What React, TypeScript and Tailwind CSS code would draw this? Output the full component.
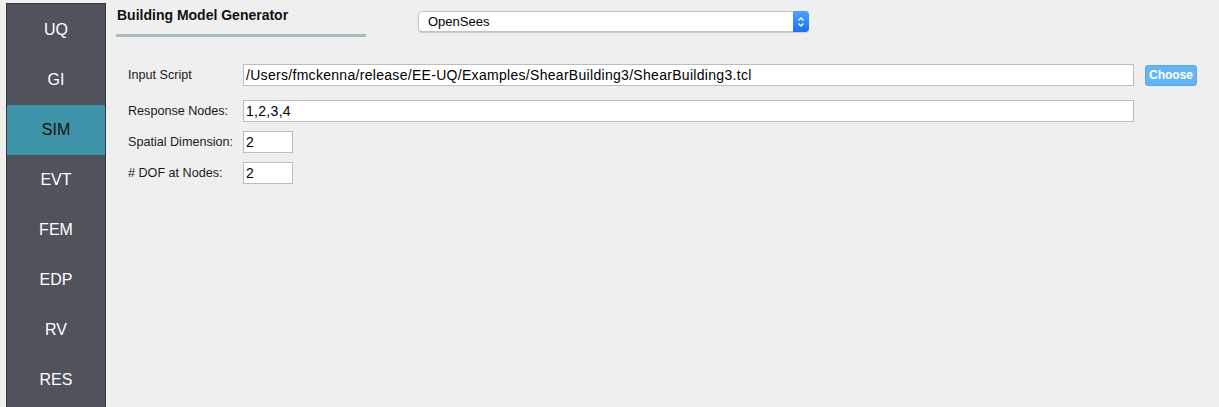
import React from "react";

const tabs = ["UQ", "GI", "SIM", "EVT", "FEM", "EDP", "RV", "RES"];

function Sidebar() {
  return (
    <div className="ml-[6px] mt-[3px] w-[100px] shrink-0 bg-[#50535b] border border-[#34373c] border-b-0 pt-[1px]">
      {tabs.map((t) => (
        <div
          key={t}
          className={
            t === "SIM"
              ? "h-[50px] flex items-center justify-center bg-[#3e93a8] text-[#111] text-[16px]"
              : "h-[50px] flex items-center justify-center text-white text-[16px]"
          }
        >
          {t}
        </div>
      ))}
    </div>
  );
}

function Field({ label, value, short }: { label: string; value: string; short?: boolean }) {
  return (
    <div className="flex items-center">
      <div className="w-[115px] text-[12.6px] text-[#1a1a1a]">{label}</div>
      <div
        className={
          short
            ? "w-[50px] h-[22px] bg-white border border-[#bdbdbd] px-[2px] flex items-center text-[14px] text-black"
            : "w-[891px] h-[22px] bg-white border border-[#bdbdbd] px-[2px] flex items-center text-[14px] tracking-[0.3px] text-black"
        }
      >
        {value}
      </div>
    </div>
  );
}

export default function App() {
  return (
    <div
      className="w-[1219px] h-[407px] overflow-hidden bg-[#efefef] flex"
      style={{ fontFamily: "'Liberation Sans', Arial, sans-serif" }}
    >
      <Sidebar />
      <div className="flex-1 pl-[10px]">
        <div className="flex">
          <div className="w-[250px]">
            <div className="pt-[6px] pl-[1px] text-[14px] font-bold text-[#111] leading-[18px]">
              Building Model Generator
            </div>
            <div className="mt-[10px] h-[3px] bg-[#aabac0]" />
          </div>
          <div className="ml-[52px] mt-[11px] w-[391px] h-[21px] bg-white rounded-[4px] border border-[#c4c4c4] shadow-[0_1px_1px_rgba(0,0,0,0.15)] flex items-center">
            <span className="flex-1 pl-[9px] text-[13px] text-black">OpenSees</span>
            <div className="w-[16px] h-[21px] -mr-[1px] rounded-r-[4px] bg-gradient-to-b from-[#4ea3ff] to-[#1a6ff5] flex items-center justify-center">
              <svg width="8" height="12" viewBox="0 0 8 12" fill="none" stroke="white" strokeWidth="1.3">
                <path d="M1.5 4.5 L4 2 L6.5 4.5" />
                <path d="M1.5 7.5 L4 10 L6.5 7.5" />
              </svg>
            </div>
          </div>
        </div>
        <div className="pl-[12px] mt-[27px] flex flex-col gap-[9px]">
          <div className="flex items-center">
            <Field label="Input Script" value="/Users/fmckenna/release/EE-UQ/Examples/ShearBuilding3/ShearBuilding3.tcl" />
            <button className="ml-[11px] w-[52px] h-[21px] rounded-[3px] bg-[#64b5f6] border border-[#5aa7e6] text-white text-[12px] font-bold">
              Choose
            </button>
          </div>
          <div className="mt-[5px]">
            <Field label="Response Nodes:" value="1,2,3,4" />
          </div>
          <Field label="Spatial Dimension:" value="2" short />
          <Field label="# DOF at Nodes:" value="2" short />
        </div>
      </div>
    </div>
  );
}
